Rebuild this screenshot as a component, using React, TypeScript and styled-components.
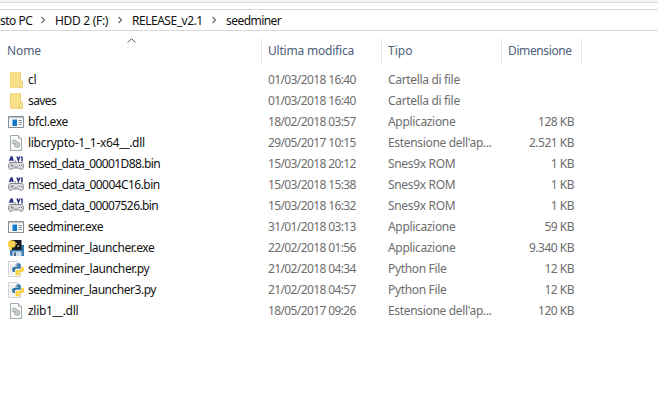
import React, { Fragment } from 'react';
import styled, { createGlobalStyle } from 'styled-components';

const GlobalStyle = createGlobalStyle`
  * { box-sizing: border-box; }
  body { margin: 0; background: #fff; overflow: hidden; }
`;

const Window = styled.div`
  width: 658px;
  height: 408px;
  overflow: hidden;
  background: #fff;
  font-family: 'Noto Sans', 'Open Sans', sans-serif;
  font-size: 12px;
  line-height: 21px;
  white-space: nowrap;
`;

const Ribbon = styled.div`
  height: 3px;
  background: #f5f5f5;
  border-bottom: 1px solid #dadbdc;
`;

const AddressBar = styled.nav`
  display: flex;
  align-items: center;
  height: 22px;
  margin-top: 6px;
  border: solid #d9d9d9;
  border-width: 1px 0;
  color: #111;
`;

const Crumb = styled.span<{ $width: number; $spacing: number }>`
  flex: none;
  width: ${(p) => p.$width}px;
  letter-spacing: ${(p) => p.$spacing}px;
`;

const Separator = styled.svg`
  flex: none;
  width: 23px;
  height: 20px;
  fill: none;
  stroke: #6d6d6d;
  stroke-width: 1.3;
`;

const columns = '262px 120px 120px 80px';

const Header = styled.div`
  position: relative;
  display: grid;
  grid-template-columns: ${columns};
  height: 26px;
  margin-top: 7px;
  line-height: 26px;
  color: #4c607a;
`;

const Heading = styled.div<{ $spacing?: number }>`
  padding-left: 6px;
  border-right: 1px solid #e3e5e9;
  letter-spacing: ${(p) => p.$spacing ?? 0}px;

  &:first-child {
    padding-left: 7px;
  }
`;

const SortArrow = styled.svg`
  position: absolute;
  left: 127px;
  top: 0;
  width: 9px;
  height: 6px;
  fill: none;
  stroke: #555;
`;

const FileList = styled.div`
  margin-top: 5px;
`;

const Row = styled.div`
  display: grid;
  grid-template-columns: ${columns};
  height: 21px;
  color: #6d6d6d;
`;

const NameCell = styled.div<{ $spacing: number }>`
  display: flex;
  align-items: center;
  gap: 4px;
  padding-left: 8px;
  color: #111;
  letter-spacing: ${(p) => p.$spacing}px;
`;

const Cell = styled.div<{ $spacing: number }>`
  padding-left: 6px;
  letter-spacing: ${(p) => p.$spacing}px;
`;

const SizeCell = styled(Cell)`
  padding: 0 8px 0 0;
  text-align: right;
`;

const Icon = styled.svg`
  flex: none;
  width: 16px;
  height: 16px;
`;

const FolderIcon = () => (
  <Icon viewBox="0 0 16 16">
    <path d="M2 .5h11V9h1.500v6.500H2z" fill="#f3d578" />
    <path d="M2.500 1h10v14h-10z" fill="#fbe08c" stroke="#f1d06f" />
    <path d="M12.500 9.500h2v6h-3v-4z" fill="#fbe6a0" stroke="#e5c565" strokeWidth=".8" />
  </Icon>
);

const ExeIcon = () => (
  <Icon viewBox="0 0 16 16">
    <path d="M.5 2.5h15v11H.5z" fill="#fff" stroke="#858b91" />
    <path d="M1 3h14v1.300H1z" fill="#c3c8cd" />
    <path d="M4.500 5.500h4.500v6.500H4.500z" fill="#1377c9" />
    <path d="M10.500 6.500h3.500M10.500 8.500h3.500M10.500 10.500h3.500" stroke="#868e96" />
    <path d="M2 5.500h1.500V12H2z" fill="#e8edf2" />
  </Icon>
);

const DllIcon = () => (
  <Icon viewBox="0 0 16 16">
    <path d="M2.5.5h8l3 3v12h-11z" fill="#fafafa" stroke="#a6a9ab" />
    <path d="M10.5.5v3h3" fill="#eee" stroke="#a6a9ab" />
    <g fill="#dfe4e6" stroke="#a3afb4">
      <circle cx="6.500" cy="7" r="1.900" strokeWidth="1.200" />
      <circle cx="9.200" cy="9.800" r="2.300" strokeWidth="1.200" />
      <circle cx="9.200" cy="9.800" r=".8" fill="#fff" strokeWidth=".7" />
    </g>
  </Icon>
);

const RomIcon = () => (
  <Icon viewBox="0 0 16 16">
    <path d="M1.500 5l1.700-4h.8l1 4M2.300 3.700h2.500M9 .500l1.400 4L11.700 .500M14 .500v5M12.800 1.300H14" fill="none" stroke="#292d83" strokeWidth="1.400" />
    <path d="M6.500 5h1.500" stroke="#60637f" />
    <path d="M3 6.500h10c1.800 0 2.500 1.300 2.500 3.200 0 2.100-.8 3.800-2.300 3.800-1.200 0-1.700-1.500-2.700-1.500h-5c-1 0-1.500 1.500-2.700 1.500C1.300 13.500.5 11.800.5 9.700.5 7.800 1.200 6.500 3 6.500z" fill="#dadade" stroke="#85858c" />
    <path d="M2.500 9.500h3M4 8v3" stroke="#8b8b94" />
    <path d="M6.500 10.500h1M8.500 10.500h1" stroke="#8b8b94" />
    <path d="M11 9.500h1M13 9.500h1" stroke="#6f6f7a" />
  </Icon>
);

const Snakes = () => (
  <>
    <path d="M8 0C5.300 0 4.800 1.100 4.800 2.200V4h3.400v.6H2.800C1 4.600.1 6 .1 8s.9 3.400 2.300 3.400h1.400V9.500c0-1.300 1-2.300 2.300-2.300h3.600c1 0 1.800-.8 1.800-1.800V2.200C11.500.7 10.200 0 8 0z" fill="#3976aa" />
    <path d="M8 16c2.700 0 3.200-1.100 3.200-2.200V12H7.800v-.6h5.400c1.800 0 2.700-1.400 2.700-3.400s-.9-3.400-2.300-3.400h-1.400v1.900c0 1.300-1 2.300-2.300 2.300H6.300c-1 0-1.800.8-1.800 1.800v3.200C4.500 15.300 5.800 16 8 16z" fill="#fad13f" />
    <circle cx="6.300" cy="2.100" r=".75" fill="#fff" />
    <circle cx="9.700" cy="13.900" r=".75" fill="#fff" />
  </>
);

const PyIcon = () => (
  <Icon viewBox="0 0 16 16">
    <path d="M.5.5h9l3 3v12H.5z" fill="#fafafa" stroke="#d0d2d5" />
    <path d="M2 4h3M2 6h2M2 8h2M2 10h2M2 12h3" stroke="#d8dadd" strokeWidth=".8" />
    <g transform="translate(4 2.300) scale(.76)"><Snakes /></g>
  </Icon>
);

const LauncherIcon = () => (
  <Icon viewBox="0 0 16 16">
    <path d="M2 5h14v11H3l-1-1z" fill="#3b7db3" />
    <path d="M4.500 11.500h9V16h-9z" fill="#c9dce9" />
    <path d="M6 12.500h2V16H6z" fill="#496a85" />
    <path d="M3 0h10.500v10H3z" fill="#171c23" />
    <path d="M0 1.500L1.500.5h4L7.500 2v4L6 7.500H4V10H1.500V7.500L0 6z" fill="#f8d24a" />
    <path d="M7.500 3H9v1H7.500zM9.500 5.500H11V7H9.500z" fill="#f3e6ad" />
  </Icon>
);

const icons = { folder: FolderIcon, exe: ExeIcon, dll: DllIcon, rom: RomIcon, launcher: LauncherIcon, py: PyIcon };

type FileEntry = { kind: keyof typeof icons; name: string; tracking: number; date: string; type: string; size?: string };

const files: FileEntry[] = [
  { kind: 'folder', name: 'cl', tracking: -0.3, date: '01/03/2018 16:40', type: 'Cartella di file' },
  { kind: 'folder', name: 'saves', tracking: -0.6, date: '01/03/2018 16:40', type: 'Cartella di file' },
  { kind: 'exe', name: 'bfcl.exe', tracking: -0.4, date: '18/02/2018 03:57', type: 'Applicazione', size: '128 KB' },
  { kind: 'dll', name: 'libcrypto-1_1-x64__.dll', tracking: -0.3, date: '29/05/2017 10:15', type: "Estensione dell'ap...", size: '2.521 KB' },
  { kind: 'rom', name: 'msed_data_00001D88.bin', tracking: -0.58, date: '15/03/2018 20:12', type: 'Snes9x ROM', size: '1 KB' },
  { kind: 'rom', name: 'msed_data_00004C16.bin', tracking: -0.55, date: '15/03/2018 15:38', type: 'Snes9x ROM', size: '1 KB' },
  { kind: 'rom', name: 'msed_data_00007526.bin', tracking: -0.58, date: '15/03/2018 16:32', type: 'Snes9x ROM', size: '1 KB' },
  { kind: 'exe', name: 'seedminer.exe', tracking: -0.45, date: '31/01/2018 03:13', type: 'Applicazione', size: '59 KB' },
  { kind: 'launcher', name: 'seedminer_launcher.exe', tracking: -0.43, date: '22/02/2018 01:56', type: 'Applicazione', size: '9.340 KB' },
  { kind: 'py', name: 'seedminer_launcher.py', tracking: -0.4, date: '21/02/2018 04:34', type: 'Python File', size: '12 KB' },
  { kind: 'py', name: 'seedminer_launcher3.py', tracking: -0.47, date: '21/02/2018 04:57', type: 'Python File', size: '12 KB' },
  { kind: 'dll', name: 'zlib1__.dll', tracking: -0.3, date: '18/05/2017 09:26', type: "Estensione dell'ap...", size: '120 KB' },
];

const crumbs = [
  { label: 'sto PC', width: 32, spacing: -0.5 },
  { label: 'HDD 2 (F:)', width: 54, spacing: -0.3 },
  { label: 'RELEASE_v2.1', width: 71, spacing: -0.48 },
  { label: 'seedminer', width: 60, spacing: -0.55 },
];

export default function App() {
  return (
    <>
      <GlobalStyle />
      <Window>
        <Ribbon />
        <AddressBar>
          {crumbs.map((c, i) => (
            <Fragment key={c.label}>
              {i > 0 && (
                <Separator viewBox="0 0 23 20"><path d="M9.500 7l3 3-3 3" /></Separator>
              )}
              <Crumb $width={c.width} $spacing={c.spacing}>{c.label}</Crumb>
            </Fragment>
          ))}
        </AddressBar>
        <Header>
          <Heading $spacing={-0.1}>Nome</Heading>
          <Heading $spacing={-0.2}>Ultima modifica</Heading>
          <Heading>Tipo</Heading>
          <Heading $spacing={-0.38}>Dimensione</Heading>
          <SortArrow viewBox="0 0 9 6"><path d="M.7 4.500L4.500.7l3.800 3.800" /></SortArrow>
        </Header>
        <FileList>
          {files.map((f) => {
            const Glyph = icons[f.kind];
            return (
              <Row key={f.name}>
                <NameCell $spacing={f.tracking}><Glyph />{f.name}</NameCell>
                <Cell $spacing={-0.62}>{f.date}</Cell>
                <Cell $spacing={-0.33}>{f.type}</Cell>
                {f.size && <SizeCell $spacing={-0.5}>{f.size}</SizeCell>}
              </Row>
            );
          })}
        </FileList>
      </Window>
    </>
  );
}
